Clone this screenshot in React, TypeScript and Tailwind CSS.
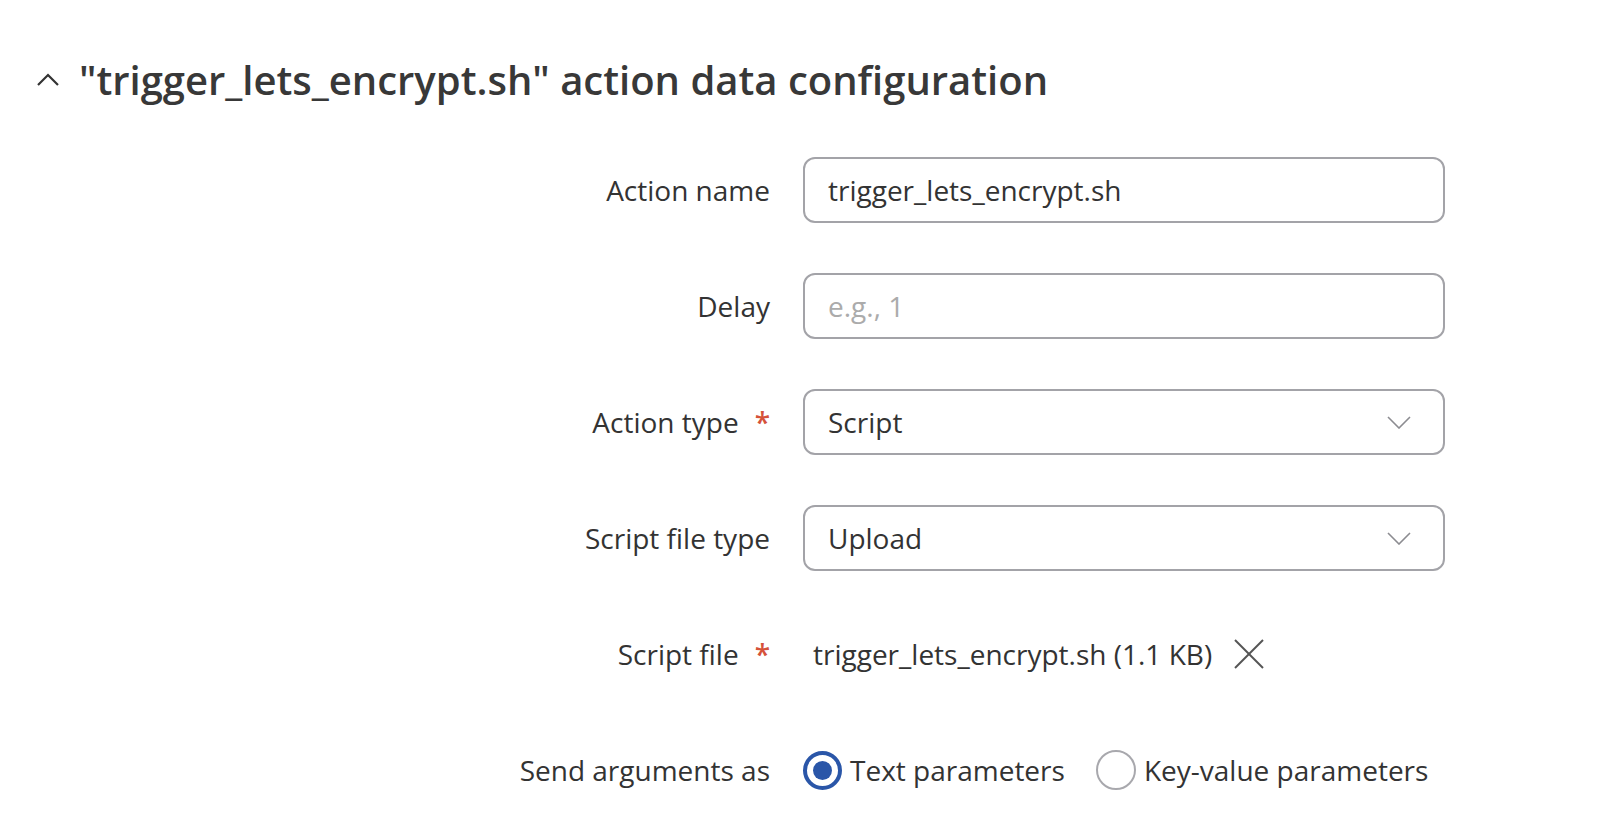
import React from "react";

function Chevron({ className }: { className?: string }) {
  return (
    <svg width="24" height="13" viewBox="0 0 24 13" fill="none" className={className}>
      <polyline points="1,1 12,12 23,1" stroke="#8c8c91" strokeWidth="1.6" />
    </svg>
  );
}

function Label({ text, required }: { text: string; required?: boolean }) {
  return (
    <div className="w-[770px] shrink-0 flex items-center justify-end">
      <span>{text}</span>
      {required && <span className="ml-[16px] text-[#d5523a] font-semibold">*</span>}
    </div>
  );
}

function Row({ label, required, children }: { label: string; required?: boolean; children: React.ReactNode }) {
  return (
    <div className="flex items-center h-[66px]">
      <Label text={label} required={required} />
      <div className="ml-[33px] w-[642px] h-full flex items-center">{children}</div>
    </div>
  );
}

function Field({ value, placeholder, select }: { value?: string; placeholder?: string; select?: boolean }) {
  return (
    <div className="w-full h-full rounded-[12px] border-[2px] border-[#a3a3a8] bg-white flex items-center pl-[23px] pr-[32px]">
      <span className={value ? "text-[#333333]" : "text-[#ababab]"}>{value || placeholder}</span>
      {select && <Chevron className="ml-auto" />}
    </div>
  );
}

export default function App() {
  return (
    <div className="h-screen overflow-hidden bg-white text-[#333333] text-[28px] leading-[1.3] font-['Open_Sans',sans-serif]">
      <div className="h-[60px] mt-[50px] flex items-center">
        <svg width="24" height="14" viewBox="0 0 24 14" fill="none" className="ml-[36px]">
          <polyline points="2,12 12,2 22,12" stroke="#333333" strokeWidth="2.2" />
        </svg>
        <h1 className="ml-[19px] text-[40px] font-semibold text-[#383838] leading-none">
          "trigger_lets_encrypt.sh" action data configuration
        </h1>
      </div>

      <div className="mt-[47px] flex flex-col gap-[50px]">
        <Row label="Action name">
          <Field value="trigger_lets_encrypt.sh" />
        </Row>
        <Row label="Delay">
          <Field placeholder="e.g., 1" />
        </Row>
        <Row label="Action type" required>
          <Field value="Script" select />
        </Row>
        <Row label="Script file type">
          <Field value="Upload" select />
        </Row>
        <Row label="Script file" required>
          <div className="flex items-center pl-[10px]">
            <span>trigger_lets_encrypt.sh (1.1 KB)</span>
            <svg width="30" height="30" viewBox="0 0 30 30" fill="none" className="ml-[22px]">
              <line x1="1" y1="1" x2="29" y2="29" stroke="#555555" strokeWidth="2" />
              <line x1="29" y1="1" x2="1" y2="29" stroke="#555555" strokeWidth="2" />
            </svg>
          </div>
        </Row>
        <Row label="Send arguments as">
          <div className="flex items-center">
            <span className="w-[39px] h-[39px] rounded-full border-[4px] border-[#2a56a8] flex items-center justify-center">
              <span className="w-[19px] h-[19px] rounded-full bg-[#2a56a8]" />
            </span>
            <span className="ml-[8px]">Text parameters</span>
            <span className="ml-[31px] w-[40px] h-[40px] rounded-full border-[2px] border-[#a8a8ad]" />
            <span className="ml-[8px]">Key-value parameters</span>
          </div>
        </Row>
      </div>
    </div>
  );
}
